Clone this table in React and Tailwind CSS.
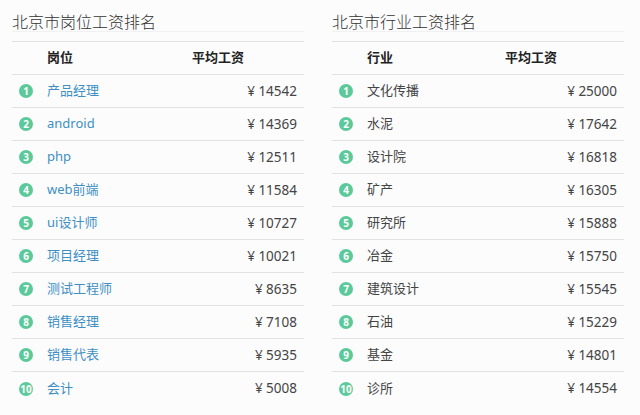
import React from "react";

const jobs = [
  ["产品经理", 14542],
  ["android", 14369],
  ["php", 12511],
  ["web前端", 11584],
  ["ui设计师", 10727],
  ["项目经理", 10021],
  ["测试工程师", 8635],
  ["销售经理", 7108],
  ["销售代表", 5935],
  ["会计", 5008],
];

const industries = [
  ["文化传播", 25000],
  ["水泥", 17642],
  ["设计院", 16818],
  ["矿产", 16305],
  ["研究所", 15888],
  ["冶金", 15750],
  ["建筑设计", 15545],
  ["石油", 15229],
  ["基金", 14801],
  ["诊所", 14554],
];

function Panel({ title, head, rows, nameClass, headW }) {
  return (
    <div className="w-[292px] flex flex-col">
      <div className="h-[32px] pt-[12px] text-[16px] leading-[20px] font-light text-[#333] border-b border-[#f1f1f3]">
        {title}
      </div>
      <div className="mt-[9px] border-t border-[#e2e2e4]">
        <div className="h-[33px] flex items-center border-b border-[#e2e2e4] text-[13px] font-semibold text-[#222]">
          <div className="w-[35px]" />
          <div className={headW}>{head}</div>
          <div>平均工资</div>
        </div>
        {rows.map(([name, val], i) => (
          <div
            key={name}
            className={
              "h-[33px] flex items-center pr-[7px] text-[13px] " +
              (i < rows.length - 1 ? "border-b border-[#e2e2e4]" : "")
            }
          >
            <div className="w-[35px] flex justify-center pr-[7px]">
              <div className="w-[14px] h-[14px] rounded-full bg-[#5cc99a] text-white text-[10px] font-bold leading-[14px] text-center">
                {i + 1}
              </div>
            </div>
            <div className={"flex-1 " + nameClass}>{name}</div>
            <div className="text-[#444] text-[13.5px]">¥ {val}</div>
          </div>
        ))}
      </div>
    </div>
  );
}

export default function App() {
  return (
    <div
      className="w-[640px] h-[415px] bg-[#fcfcfd] pl-[12px] flex gap-[28px]"
      style={{ fontFamily: '"Noto Sans", "Noto Sans CJK SC", sans-serif' }}
    >
      <Panel
        title="北京市岗位工资排名"
        head="岗位"
        rows={jobs}
        nameClass="text-[#3d8fc4]"
        headW="w-[145px]"
      />
      <Panel
        title="北京市行业工资排名"
        head="行业"
        rows={industries}
        nameClass="text-[#444]"
        headW="w-[138px]"
      />
    </div>
  );
}
